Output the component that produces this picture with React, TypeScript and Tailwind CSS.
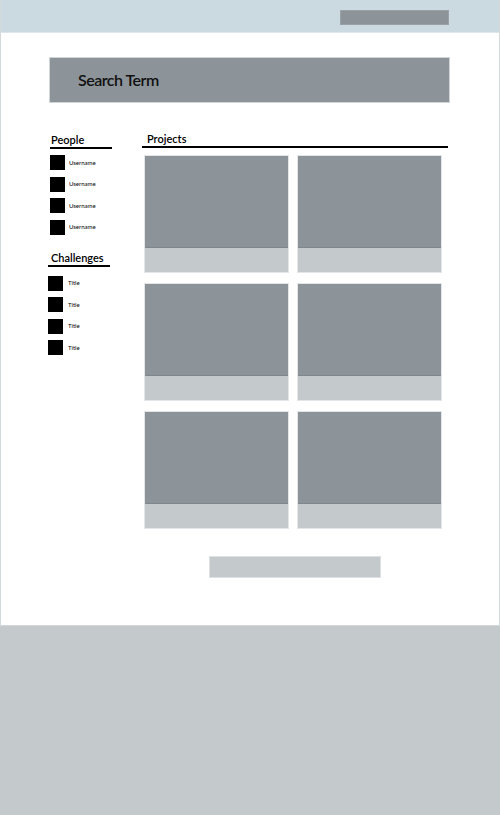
import React from "react";

const people = ["Username", "Username", "Username", "Username"];
const challenges = ["Title", "Title", "Title", "Title"];

function Card() {
  return (
    <div className="flex h-[118px] flex-col border border-[#e3e6e8]">
      <div className="h-[92px] border-b border-[#7f878c] bg-[#8c9399]" />
      <div className="flex-1 bg-[#c4c9cb]" />
    </div>
  );
}

export default function App() {
  return (
    <div
      className="flex h-[815px] w-[500px] flex-col bg-[#c4c9cb]"
      style={{ fontFamily: "Lato, 'Open Sans', sans-serif" }}
    >
      <div className="flex h-[626px] flex-col border-x border-b border-[#d3d8db] bg-white">
        <div className="flex h-[33px] items-start justify-end border-b border-[#dde6ea] bg-[#cbdae1] pr-[50px] pt-[10px]">
          <div className="h-[15px] w-[109px] border border-[#9aa1a6] bg-[#8c9399]" />
        </div>
        <div className="ml-[48px] mt-[24px] flex h-[46px] w-[401px] items-center border border-[#d0d5d8] bg-[#8c9399] pl-[28px]">
          <span className="text-[16px] font-semibold tracking-[-0.5px] text-[#111]">Search Term</span>
        </div>
        <div className="mt-[29px] flex">
          <div className="ml-[46px] flex w-[67px] flex-col">
            <div className="ml-[3px] flex flex-col">
              <div className="h-[15px] pl-[1px] text-[11px] font-semibold leading-[15px] text-black">People</div>
              <div className="h-[2px] w-[62px] bg-black" />
              <div className="mt-[6px] flex flex-col gap-[6.5px]">
                {people.map((p, i) => (
                  <div key={i} className="flex items-center gap-[4px]">
                    <div className="h-[15px] w-[15px] bg-black" />
                    <span className="text-[6px] leading-[8px] text-black">{p}</span>
                  </div>
                ))}
              </div>
            </div>
            <div className="ml-[1px] mt-[15px] flex flex-col">
              <div className="h-[15px] pl-[3px] text-[11px] font-semibold leading-[15px] text-black">Challenges</div>
              <div className="h-[2px] w-[62px] bg-black" />
              <div className="mt-[9px] flex flex-col gap-[6.5px]">
                {challenges.map((p, i) => (
                  <div key={i} className="flex items-center gap-[5px]">
                    <div className="h-[15px] w-[15px] bg-black" />
                    <span className="text-[6px] leading-[8px] text-black">{p}</span>
                  </div>
                ))}
              </div>
            </div>
          </div>
          <div className="ml-[28px] flex w-[306px] flex-col">
            <div className="h-[14px] pl-[5px] text-[11px] font-semibold leading-[14px] text-black">Projects</div>
            <div className="h-[2px] w-full bg-black" />
            <div className="mt-[7px] grid grid-cols-[145px_145px] gap-x-[8px] gap-y-[10px] pl-[2px]">
              <Card />
              <Card />
              <Card />
              <Card />
              <Card />
              <Card />
            </div>
            <div className="ml-[67px] mt-[27px] h-[22px] w-[172px] border border-[#dde1e3] bg-[#c4c9cb]" />
          </div>
        </div>
      </div>
    </div>
  );
}
